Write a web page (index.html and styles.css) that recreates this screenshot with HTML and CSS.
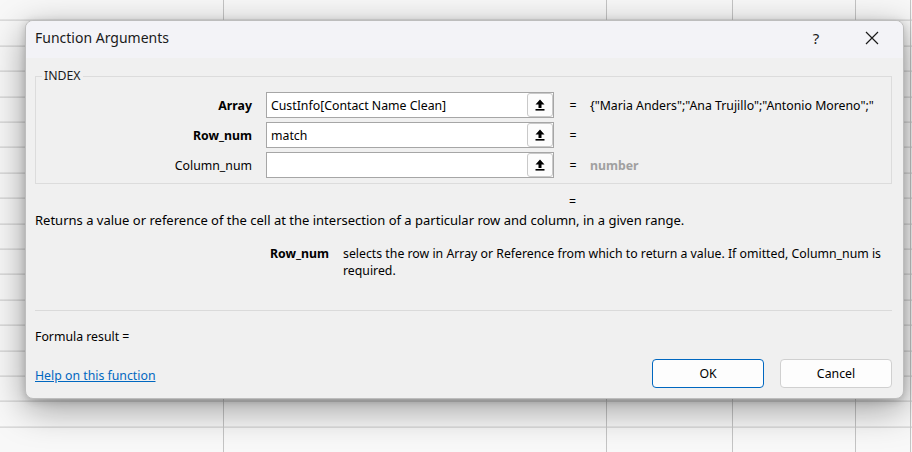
FILE: index.html
```html
<!DOCTYPE html>
<html>
<head>
<meta charset="utf-8">
<link rel="stylesheet" href="styles.css">
</head>
<body>
<div class="sheet"></div>
<div class="dialog">
  <div class="titlebar">
    <span class="title">Function Arguments</span>
    <span class="tb-help">?</span>
    <span class="tb-close">
      <svg width="14" height="14" viewBox="0 0 14 14"><path d="M1 1 L13 13 M13 1 L1 13" stroke="#1a1a1a" stroke-width="1.2" fill="none"/></svg>
    </span>
  </div>
  <div class="content">
    <fieldset class="group">
      <legend>INDEX</legend>
      <div class="arg-row">
        <label class="arg-label bold">Array</label>
        <div class="arg-input"><span class="arg-text">CustInfo[Contact Name Clean]</span><span class="ref-btn"><svg width="10" height="12" viewBox="0 0 10 12"><path d="M5 0.5 L9.5 5.5 H6.5 V9 H3.5 V5.5 H0.5 Z" fill="#000"/><rect x="0.5" y="10" width="9" height="1.6" fill="#000"/></svg></span></div>
        <span class="arg-eq">=</span>
        <span class="arg-val">{"Maria Anders";"Ana Trujillo";"Antonio Moreno";"</span>
      </div>
      <div class="arg-row">
        <label class="arg-label bold">Row_num</label>
        <div class="arg-input"><span class="arg-text">match</span><span class="ref-btn"><svg width="10" height="12" viewBox="0 0 10 12"><path d="M5 0.5 L9.5 5.5 H6.5 V9 H3.5 V5.5 H0.5 Z" fill="#000"/><rect x="0.5" y="10" width="9" height="1.6" fill="#000"/></svg></span></div>
        <span class="arg-eq">=</span>
        <span class="arg-val"></span>
      </div>
      <div class="arg-row">
        <label class="arg-label">Column_num</label>
        <div class="arg-input"><span class="arg-text"></span><span class="ref-btn"><svg width="10" height="12" viewBox="0 0 10 12"><path d="M5 0.5 L9.5 5.5 H6.5 V9 H3.5 V5.5 H0.5 Z" fill="#000"/><rect x="0.5" y="10" width="9" height="1.6" fill="#000"/></svg></span></div>
        <span class="arg-eq">=</span>
        <span class="arg-val hint">number</span>
      </div>
    </fieldset>
    <div class="result-eq">=</div>
    <p class="func-desc">Returns a value or reference of the cell at the intersection of a particular row and column, in a given range.</p>
    <div class="arg-help">
      <span class="arg-help-name">Row_num</span>
      <span class="arg-help-text">selects the row in Array or Reference from which to return a value. If omitted, Column_num is required.</span>
    </div>
    <div class="separator"></div>
    <div class="formula-result">Formula result =</div>
    <div class="footer">
      <a class="help-link" href="#">Help on this function</a>
      <div class="buttons">
        <button class="btn btn-primary">OK</button>
        <button class="btn">Cancel</button>
      </div>
    </div>
  </div>
</div>
</body>
</html>
```

FILE: styles.css
```css
html, body {
  margin: 0;
  padding: 0;
}
body {
  width: 912px;
  height: 452px;
  overflow: hidden;
  position: relative;
  background: #f7f7f7;
  font-family: "Segoe UI", "Noto Sans", sans-serif;
  font-size: 12.3px;
  color: #000;
}
.sheet {
  width: 912px;
  height: 452px;
  background-color: #f8f8f8;
  background-image:
    linear-gradient(to right, transparent 223px, #c4c4c4 223px, #c4c4c4 224px, transparent 224px,
      transparent 606px, #c4c4c4 606px, #c4c4c4 607px, transparent 607px,
      transparent 732px, #c4c4c4 732px, #c4c4c4 733px, transparent 733px,
      transparent 855px, #c4c4c4 855px, #c4c4c4 856px, transparent 856px,
      transparent 910px, #c4c4c4 910px, #c4c4c4 911px, transparent 911px),
    repeating-linear-gradient(to bottom, transparent 0, transparent 24.4px, #c8c8c8 24.4px, #c8c8c8 25.4px);
  background-position: 0 0, 0 -4.4px;
}
.dialog {
  position: absolute;
  left: 25px;
  top: 20px;
  width: 877px;
  height: 377px;
  background: #f0f0f0;
  border: 1px solid #bdbdbd;
  border-radius: 8px;
  box-shadow: 0 10px 36px rgba(0,0,0,0.38), 0 2px 8px rgba(0,0,0,0.18);
  display: flex;
  flex-direction: column;
  overflow: hidden;
}
.titlebar {
  height: 37px;
  flex: 0 0 37px;
  box-sizing: border-box;
  padding-bottom: 4px;
  background: #f3f3f7;
  display: flex;
  align-items: center;
  padding-left: 9px;
}
.title {
  font-size: 14px;
  color: #1a1a1a;
  flex: 1;
}
.tb-help {
  font-size: 15px;
  color: #1a1a1a;
  width: 20px;
  text-align: center;
  margin-right: 39px;
}
.tb-close {
  width: 14px;
  height: 14px;
  margin-right: 24px;
  display: flex;
}
.content {
  padding: 0 11px 0 9px;
  display: flex;
  flex-direction: column;
}
.group {
  margin: 10px 0 0 0;
  padding: 8px 0 5px 0;
  border: 1px solid #dcdcdc;
  display: flex;
  flex-direction: column;
  gap: 4px;
  min-width: 0;
}
.group legend {
  margin-left: 6px;
  padding: 0 2px;
  font-size: 12.3px;
  color: #1a1a1a;
  line-height: 16px;
}
.arg-row {
  display: flex;
  align-items: center;
  height: 26px;
}
.arg-label {
  width: 216px;
  text-align: right;
  margin-right: 14px;
  color: #000;
}
.bold { font-weight: 700; }
.arg-input {
  width: 286px;
  height: 24px;
  border: 1px solid #a6a6a6;
  background: #fff;
  display: flex;
  align-items: center;
  justify-content: space-between;
}
.arg-text {
  padding-left: 4px;
  white-space: nowrap;
}
.ref-btn {
  width: 24px;
  height: 22px;
  border: 1px solid #c9c9c9;
  border-radius: 3px;
  background: #fcfcfc;
  display: flex;
  align-items: center;
  justify-content: center;
}
.arg-eq {
  margin-left: 14px;
  width: 10px;
  text-align: center;
}
.arg-val {
  margin-left: 12px;
  white-space: nowrap;
}
.hint {
  color: #a0a0a0;
  font-weight: 700;
}
.result-eq {
  margin-top: 9px;
  padding-left: 534px;
  height: 17px;
  line-height: 17px;
}
.func-desc {
  margin: 2px 0 0 0;
  font-size: 13px;
  line-height: 17px;
}
.arg-help {
  display: flex;
  margin-top: 16px;
  line-height: 17px;
}
.arg-help-name {
  width: 294px;
  text-align: right;
  font-weight: 700;
  flex: 0 0 294px;
}
.arg-help-text {
  margin-left: 14px;
  width: 545px;
}
.separator {
  margin-top: 31px;
  height: 1px;
  background: #dadada;
}
.formula-result {
  margin-top: 17px;
  line-height: 17px;
}
.footer {
  margin-top: 14px;
  display: flex;
  align-items: center;
  justify-content: space-between;
}
.help-link {
  color: #0067c0;
  text-decoration: underline;
  margin-top: 4px;
}
.buttons {
  display: flex;
  gap: 16px;
}
.btn {
  width: 112px;
  height: 29px;
  font-family: inherit;
  font-size: 12.3px;
  color: #000;
  background: #fdfdfd;
  border: 1px solid #d0d0d0;
  border-radius: 4px;
  padding: 0;
}
.btn-primary {
  border-color: #0067c0;
  background: #fdfdfd;
}
```
